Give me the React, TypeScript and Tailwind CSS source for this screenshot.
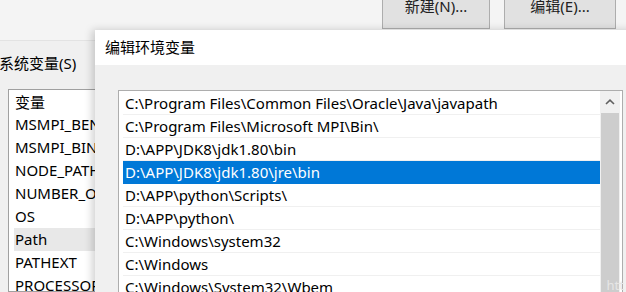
const FONT = "font-['Noto_Sans','Noto_Sans_CJK_SC',sans-serif]";

const SYS_VARS = [
  "MSMPI_BENCHMARKS",
  "MSMPI_BIN",
  "NODE_PATH",
  "NUMBER_OF_PROCESSORS",
  "OS",
  "Path",
  "PATHEXT",
  "PROCESSOR_ARCHITECTURE",
];

const PATHS = [
  "C:\\Program Files\\Common Files\\Oracle\\Java\\javapath",
  "C:\\Program Files\\Microsoft MPI\\Bin\\",
  "D:\\APP\\JDK8\\jdk1.80\\bin",
  "D:\\APP\\JDK8\\jdk1.80\\jre\\bin",
  "D:\\APP\\python\\Scripts\\",
  "D:\\APP\\python\\",
  "C:\\Windows\\system32",
  "C:\\Windows",
  "C:\\Windows\\System32\\Wbem",
];

function TopButton({ label }: { label: string }) {
  return (
    <div className="flex h-[32px] items-end justify-center border border-[#adadad] bg-[#e1e1e1] pb-[14px] text-[15px] leading-none text-[#222]">
      {label}
    </div>
  );
}

export default function App() {
  return (
    <div className={`relative h-[292px] w-[626px] overflow-hidden bg-[#f0f0f0] text-black ${FONT}`}>
      {/* background window: 环境变量 */}
      <div className="flex h-full flex-col">
        <div className="flex h-[41px] items-start border-b border-[#e3e3e3] bg-[#f4f4f4]">
          <div className="ml-[382px] mt-[-3px] w-[108px]">
            <TopButton label="新建(N)..." />
          </div>
          <div className="ml-[14px] mt-[-3px] w-[112px]">
            <TopButton label="编辑(E)..." />
          </div>
        </div>
        <div className="ml-[-1px] mt-[12px] text-[15px] leading-[20px]">系统变量(S)</div>
        <div className="ml-[8px] mt-[16px] w-[88px] flex-1 overflow-hidden border-y border-l border-[#a0a0a0] bg-white pl-[5px] pt-[1px] text-[15px]">
          <div className="flex h-[22px] items-center pl-[1px]">变量</div>
          {SYS_VARS.map((v) => (
            <div
              key={v}
              className={`flex h-[23px] items-center whitespace-nowrap pl-[1px] ${v === "Path" ? "bg-[#e8e8e8]" : ""}`}
            >
              {v}
            </div>
          ))}
        </div>
      </div>

      {/* dialog: 编辑环境变量 */}
      <div className="absolute bottom-[-20px] left-[95px] right-[-20px] top-[30px] flex flex-col bg-[#f0f0f0] shadow-[-3px_0_8px_rgba(0,0,0,0.18)]">
        <div className="flex h-[35px] items-center bg-white pl-[10px] text-[15px]">编辑环境变量</div>
        <div className="flex flex-1 pl-[23px] pt-[25px]">
          <div className="flex h-full w-[505px] border border-[#adadad] bg-white">
            <div className="flex-1 pl-[4px] pt-[1px] text-[15px]">
              {PATHS.map((p, i) => (
                <div
                  key={p}
                  className={`flex h-[23px] items-center whitespace-nowrap border-b pl-[2px] ${
                    i === 3 ? "border-[#0078d7] bg-[#0078d7] text-white" : "border-[#f0f0f0]"
                  }`}
                >
                  {p}
                </div>
              ))}
            </div>
            <div className="flex w-[20px] flex-col bg-[#f0f0f0]">
              <div className="flex h-[22px] items-center justify-center text-[#606060]">
                <svg width="10" height="6" viewBox="0 0 10 6" fill="none">
                  <path d="M1 5L5 1.2L9 5" stroke="currentColor" strokeWidth="1.6" />
                </svg>
              </div>
              <div className="mx-[1px] flex-1 bg-[#cdcdcd]" />
            </div>
            <div className="w-[2px] bg-white" />
          </div>
        </div>
      </div>

      <div className="absolute bottom-[-3px] right-[2px] text-[13px] text-[#e6e6e6]">htt</div>
    </div>
  );
}
